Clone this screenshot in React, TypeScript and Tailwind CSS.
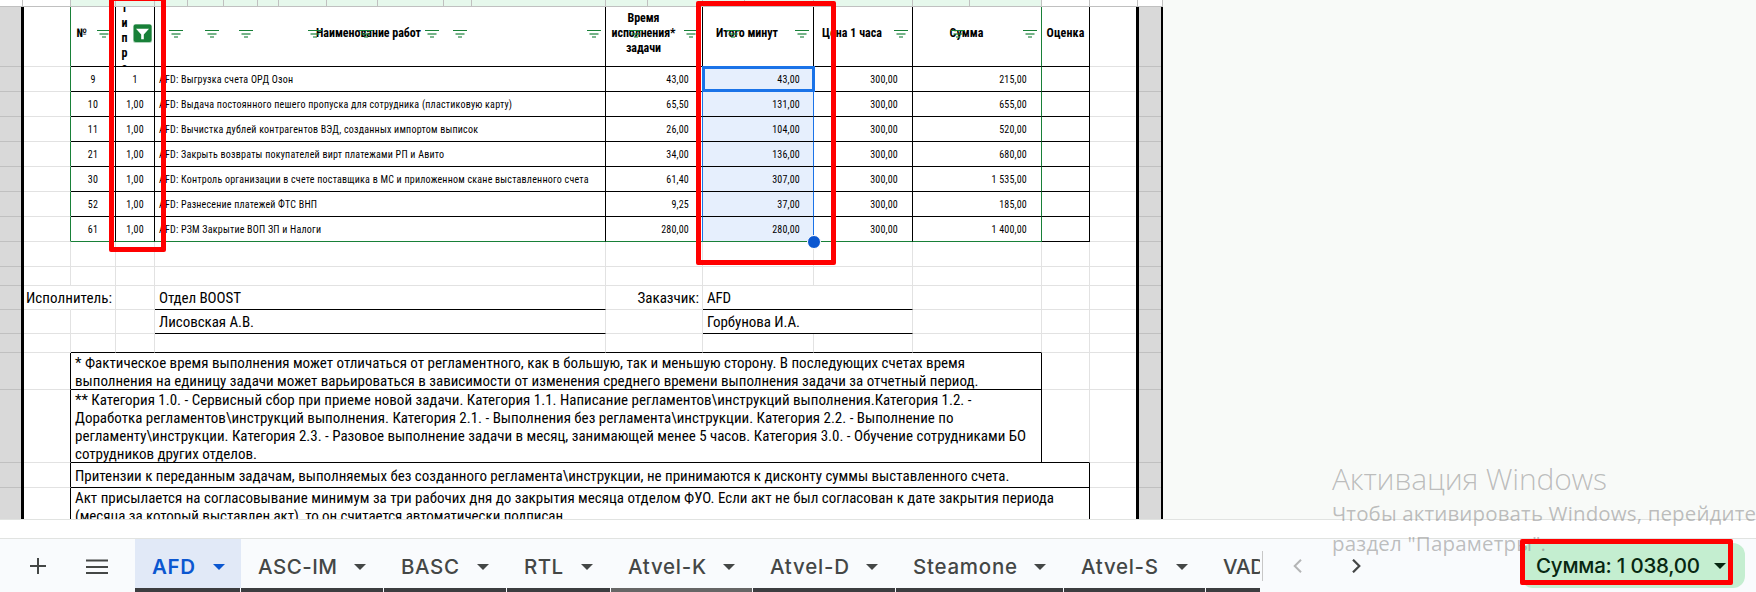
import { useLayoutEffect, useRef, type ReactNode } from "react";

/** Spreads a single line of text over the given width by adjusting its tracking. */
function Fit({ w, children, className = "" }: { w: number; children: string; className?: string }) {
  const ref = useRef<HTMLSpanElement>(null);
  useLayoutEffect(() => {
    const el = ref.current;
    if (!el) return;
    el.style.letterSpacing = "0px";
    const natural = el.getBoundingClientRect().width;
    const gaps = Math.max(children.length - 1, 1);
    const spacing = (w - natural) / gaps;
    el.style.letterSpacing = `${spacing}px`;
    el.style.marginRight = `${-spacing}px`;
  }, [w, children]);
  return (
    <span ref={ref} className={`inline-block whitespace-pre ${className}`}>
      {children}
    </span>
  );
}

const topSegments = [
  "w-[23px] bg-white",
  "w-[48px] bg-white",
  "w-[45px] bg-[#e6f8ec]",
  "w-[39px] bg-[#e6f8ec]",
  "w-[33px] bg-[#e6f8ec]",
  "w-[36px] bg-[#e6f8ec]",
  "w-[34px] bg-[#e6f8ec]",
  "w-[21px] bg-[#e6f8ec]",
  "w-[48px] bg-[#e6f8ec]",
  "w-[51px] bg-[#e6f8ec]",
  "w-[66px] bg-[#e6f8ec]",
  "w-[28px] bg-[#e6f8ec]",
  "w-[134px] bg-[#e6f8ec]",
  "w-[42px] bg-[#e6f8ec]",
  "w-[55px] bg-[#e6f8ec]",
  "w-[42px] bg-[#e6f8ec]",
  "w-[69px] bg-[#e6f8ec]",
  "w-[99px] bg-[#e6f8ec]",
  "w-[57px] bg-[#e6f8ec]",
  "w-[72px] bg-[#e6f8ec]",
  "w-[48px] bg-white",
  "w-[48px] bg-white",
  "w-[25px] bg-white",
];

const rowHeights = [
  "h-[60px]", "h-[25px]", "h-[25px]", "h-[25px]", "h-[25px]", "h-[25px]", "h-[25px]", "h-[25px]",
  "h-[25px]", "h-[19px]", "h-[24px]", "h-[24px]", "h-[19px]", "h-[37px]", "h-[73px]", "h-[25px]",
];

function GraySide({ className }: { className: string }) {
  return (
    <div className={`flex shrink-0 flex-col bg-[#d9d9d9] ${className}`}>
      {rowHeights.map((h, i) => (
        <div key={i} className={`shrink-0 border-b border-[#c0c0c0] ${h}`} />
      ))}
    </div>
  );
}

const filterSpots = [
  "left-[97px]", "left-[169px]", "left-[205px]", "left-[239px]", "left-[308px]", "left-[359px]",
  "left-[425px]", "left-[453px]", "left-[587px]", "left-[629px]", "left-[684px]", "left-[726px]",
  "left-[795px]", "left-[894px]", "left-[951px]", "left-[1023px]",
];

function FilterLines({ className }: { className: string }) {
  return (
    <svg className={`absolute top-[30px] h-2 w-3.5 ${className}`} viewBox="0 0 14 8" fill="#188038">
      <rect x="0" y="0" width="14" height="1" />
      <rect x="2.5" y="3" width="9" height="2" opacity=".6" />
      <rect x="5" y="6" width="4" height="2" opacity=".55" />
    </svg>
  );
}

type Task = { n: string; type: string; name: string; w: number; time: string; total: string; sum: string };
const tasks: Task[] = [
  { n: "9", type: "1", name: "AFD: Выгрузка счета ОРД Озон", w: 134, time: "43,00", total: "43,00", sum: "215,00" },
  { n: "10", type: "1,00", name: "AFD: Выдача постоянного пешего пропуска для сотрудника (пластиковую карту)", w: 353, time: "65,50", total: "131,00", sum: "655,00" },
  { n: "11", type: "1,00", name: "AFD: Вычистка дублей контрагентов ВЭД, созданных импортом выписок", w: 319, time: "26,00", total: "104,00", sum: "520,00" },
  { n: "21", type: "1,00", name: "AFD: Закрыть возвраты покупателей вирт платежами РП и Авито", w: 285, time: "34,00", total: "136,00", sum: "680,00" },
  { n: "30", type: "1,00", name: "AFD: Контроль организации в счете поставщика в МС и приложенном скане выставленного счета", w: 429.5, time: "61,40", total: "307,00", sum: "1 535,00" },
  { n: "52", type: "1,00", name: "AFD: Разнесение платежей ФТС ВНП", w: 158, time: "9,25", total: "37,00", sum: "185,00" },
  { n: "61", type: "1,00", name: "AFD: РЗМ Закрытие ВОП ЗП и Налоги", w: 162, time: "280,00", total: "280,00", sum: "1 400,00" },
];

function Cell({ className = "", children }: { className?: string; children?: ReactNode }) {
  return <div className={`flex h-full shrink-0 border-r border-b ${className}`}>{children}</div>;
}

const L = "border-[#e2e2e2]";

function TaskRow({ t, first, last }: { t: Task; first: boolean; last: boolean }) {
  const bottom = last ? "border-b-[#188038]" : "border-b-black";
  const num = "items-center justify-end pt-[2px] tracking-[0.2px]";
  const mid = "items-center justify-center pt-[2px] tracking-[0.2px]";
  return (
    <div className="flex h-[25px] shrink-0 text-[10px] leading-3">
      <Cell className="w-[47px] border-r-[#188038] border-b-[#e2e2e2]" />
      <Cell className={`w-[45px] border-r-black ${mid} ${bottom}`}>{t.n}</Cell>
      <Cell className={`w-[39px] border-r-black ${mid} ${bottom}`}>{t.type}</Cell>
      <Cell className={`w-[451px] items-center border-r-black pt-[2px] pl-1 ${bottom}`}>
        <Fit w={t.w}>{t.name}</Fit>
      </Cell>
      <Cell className={`w-[97px] border-r-[#1a73e8] pr-[13px] ${num} ${bottom}`}>{t.time}</Cell>
      <Cell className={`relative w-[111px] border-r-[#1a73e8] bg-[#e6effd] pr-[13px] ${num} ${bottom}`}>
        {t.total}
        {first && <span className="absolute -top-px -right-[2px] -bottom-px -left-px border-[3px] border-[#1a73e8]" />}
        {last && <span className="absolute -right-[8px] -bottom-[8px] z-10 size-3.5 rounded-full border border-white bg-[#0b57d0]" />}
      </Cell>
      <Cell className={`w-[99px] border-r-black pr-3.5 ${num} ${bottom}`}>300,00</Cell>
      <Cell className={`w-[129px] border-r-[#188038] pr-3.5 ${num} ${bottom}`}>{t.sum}</Cell>
      <Cell className="w-[48px] border-black" />
      <Cell className="w-[46px] border-r-transparent border-b-[#e2e2e2]" />
    </div>
  );
}

function EmptyRow({ className, b = "border-b-[#e2e2e2]" }: { className: string; b?: string }) {
  const c = `border-r-[#e2e2e2] ${b}`;
  return (
    <div className={`flex shrink-0 ${className}`}>
      <Cell className={`w-[47px] ${L}`} />
      <Cell className={`w-[45px] ${c}`} />
      <Cell className={`w-[39px] ${c}`} />
      <Cell className={`w-[451px] ${c}`} />
      <Cell className={`w-[97px] ${c}`} />
      <Cell className={`w-[111px] ${c}`} />
      <Cell className={`w-[99px] ${c}`} />
      <Cell className={`w-[129px] ${c}`} />
      <Cell className={`w-[48px] ${L}`} />
      <Cell className="w-[46px] border-r-transparent border-b-[#e2e2e2]" />
    </div>
  );
}

const head = "items-center justify-center border-b-black pb-[6px]";

function Sheet() {
  return (
    <div className="flex w-[1112px] shrink-0 flex-col overflow-hidden bg-white">
      <div className="flex h-[60px] shrink-0 text-[12px] leading-[15px] font-bold">
        <Cell className="w-[47px] border-r-[#188038] border-b-[#e2e2e2]" />
        <Cell className={`w-[45px] border-r-black pr-[23px] ${head}`}>
          <Fit w={10}>№</Fit>
        </Cell>
        <Cell className="w-[39px] overflow-hidden border-black">
          <div className="-mt-[6px] ml-[5px] flex w-[7px] flex-col items-center">
            <span>т</span><span>и</span><span>п</span><span>р</span><span>о</span>
          </div>
        </Cell>
        <Cell className={`w-[451px] border-r-black pr-[23px] ${head}`}>
          <Fit w={105}>Наименование работ</Fit>
        </Cell>
        <Cell className={`w-[97px] flex-col border-r-black pr-[21px] ${head}`}>
          <Fit w={32}>Время</Fit>
          <Fit w={64}>исполнения*</Fit>
          <Fit w={35}>задачи</Fit>
        </Cell>
        <Cell className={`w-[111px] border-r-black pr-[22px] ${head}`}>
          <Fit w={62}>Итого минут</Fit>
        </Cell>
        <Cell className={`w-[99px] border-r-black pr-[22px] ${head}`}>
          <Fit w={60}>Цена 1 часа</Fit>
        </Cell>
        <Cell className={`w-[129px] border-r-[#188038] pr-[21px] ${head}`}>
          <Fit w={34}>Сумма</Fit>
        </Cell>
        <Cell className={`w-[48px] border-r-black ${head}`}>
          <Fit w={38}>Оценка</Fit>
        </Cell>
        <Cell className="w-[46px] border-r-transparent border-b-[#e2e2e2]" />
      </div>
      {tasks.map((t, i) => (
        <TaskRow key={t.n} t={t} first={i === 0} last={i === tasks.length - 1} />
      ))}
      <EmptyRow className="h-[25px]" />
      <EmptyRow className="h-[19px]" />
      <div className="flex h-6 shrink-0 text-[15px] leading-[18px]">
        <Cell className="w-[47px] border-r-transparent border-b-[#e2e2e2]" />
        <Cell className={`w-[45px] justify-end pt-[3px] pr-[3px] ${L}`}>
          <Fit w={86}>Исполнитель:</Fit>
        </Cell>
        <Cell className="w-[39px] border-[#e2e2e2]" />
        <Cell className="w-[451px] border-r-[#e2e2e2] border-b-black pt-[3px] pl-1">
          <Fit w={82}>Отдел BOOST</Fit>
        </Cell>
        <Cell className={`w-[97px] justify-end pt-[3px] pr-[3px] ${L}`}>
          <Fit w={61.5}>Заказчик:</Fit>
        </Cell>
        <Cell className="w-[210px] border-r-[#e2e2e2] border-b-black pt-[3px] pl-1">
          <Fit w={24}>AFD</Fit>
        </Cell>
        <Cell className={`w-[129px] ${L}`} />
        <Cell className={`w-[48px] ${L}`} />
        <Cell className="w-[46px] border-r-transparent border-b-[#e2e2e2]" />
      </div>
      <div className="flex h-6 shrink-0 text-[15px] leading-[18px]">
        <Cell className={`w-[47px] ${L}`} />
        <Cell className={`w-[45px] ${L}`} />
        <Cell className={`w-[39px] ${L}`} />
        <Cell className="w-[451px] border-r-[#e2e2e2] border-b-black pt-[3px] pl-1">
          <Fit w={95}>Лисовская А.В.</Fit>
        </Cell>
        <Cell className={`w-[97px] ${L}`} />
        <Cell className="w-[210px] border-r-[#e2e2e2] border-b-black pt-[3px] pl-1">
          <Fit w={93}>Горбунова И.А.</Fit>
        </Cell>
        <Cell className={`w-[129px] ${L}`} />
        <Cell className={`w-[48px] ${L}`} />
        <Cell className="w-[46px] border-r-transparent border-b-[#e2e2e2]" />
      </div>
      <EmptyRow className="h-[19px]" b="border-b-black" />
      <div className="flex h-[37px] shrink-0 text-[15px] leading-[18px]">
        <Cell className="w-[47px] border-r-black border-b-[#e2e2e2]" />
        <Cell className="w-[971px] flex-col items-start border-black pt-px pl-1">
          <Fit w={890}>* Фактическое время выполнения может отличаться от регламентного, как в большую, так и меньшую сторону. В последующих счетах время</Fit>
          <Fit w={903.5}>выполнения на единицу задачи может варьироваться в зависимости от изменения среднего времени выполнения задачи за отчетный период.</Fit>
        </Cell>
        <Cell className={`w-[48px] ${L}`} />
        <Cell className="w-[46px] border-r-transparent border-b-[#e2e2e2]" />
      </div>
      <div className="flex h-[73px] shrink-0 text-[15px] leading-[18px]">
        <Cell className="w-[47px] border-r-black border-b-[#e2e2e2]" />
        <Cell className="w-[971px] flex-col items-start border-black pt-px pl-1">
          <Fit w={896.5}>** Категория 1.0. - Сервисный сбор при приеме новой задачи. Категория 1.1. Написание регламентов\инструкций выполнения.Категория 1.2. -</Fit>
          <Fit w={878.5}>Доработка регламентов\инструкций выполнения. Категория 2.1. - Выполнения без регламента\инструкции. Категория 2.2. - Выполнение по</Fit>
          <Fit w={951}>регламенту\инструкции. Категория 2.3. - Разовое выполнение задачи в месяц, занимающей менее 5 часов. Категория 3.0. - Обучение сотрудниками БО</Fit>
          <Fit w={182}>сотрудников других отделов.</Fit>
        </Cell>
        <Cell className="w-[48px] border-r-[#e2e2e2] border-b-black" />
        <Cell className="w-[46px] border-r-transparent border-b-[#e2e2e2]" />
      </div>
      <div className="flex h-[25px] shrink-0 text-[15px] leading-[18px]">
        <Cell className="w-[47px] border-r-black border-b-[#e2e2e2]" />
        <Cell className="w-[1019px] border-black pt-1 pl-1">
          <Fit w={934.5}>Притензии к переданным задачам, выполняемых без созданного регламента\инструкции, не принимаются к дисконту суммы выставленного счета.</Fit>
        </Cell>
        <Cell className="w-[46px] border-r-transparent border-b-[#e2e2e2]" />
      </div>
      <div className="flex h-[37px] shrink-0 text-[15px] leading-[18px]">
        <Cell className="w-[47px] border-r-black border-b-transparent" />
        <Cell className="w-[1019px] flex-col items-start border-black pt-px pl-1">
          <Fit w={979}>Акт присылается на согласовывание минимум за три рабочих дня до закрытия месяца отделом ФУО. Если акт не был согласован к дате закрытия периода</Fit>
          <Fit w={492}>(месяца за который выставлен акт), то он считается автоматически подписан.</Fit>
        </Cell>
      </div>
    </div>
  );
}

const tabs = [
  { name: "ASC-IM", w: 79, tab: "w-[143px]", bar: "bg-[#3c3d40]" },
  { name: "BASC", w: 58, tab: "w-[123px]", bar: "bg-[#3c3d40]" },
  { name: "RTL", w: 39, tab: "w-[104px]", bar: "bg-[#3c3d40]" },
  { name: "Atvel-K", w: 78, tab: "w-[142px]", bar: "bg-[#666666]" },
  { name: "Atvel-D", w: 79, tab: "w-[143px]", bar: "bg-[#3c3d40]" },
  { name: "Steamone", w: 104, tab: "w-[168px]", bar: "bg-[#3c3d40]" },
  { name: "Atvel-S", w: 77, tab: "w-[142px]", bar: "bg-[#3c3d40]" },
  { name: "VADIM", w: 66, tab: "w-[133px]", bar: "bg-[#3c3d40]" },
];

function Caret() {
  return (
    <svg className="h-1.5 w-3" viewBox="0 0 12 6" fill="currentColor">
      <path d="M0 0h12L6 6z" />
    </svg>
  );
}

function TabBar() {
  return (
    <div className="flex h-[53px] shrink-0 bg-[#f9fbfd] font-[Inter,sans-serif] text-[20.5px] text-[#444746]">
      <div className="flex w-[135px] shrink-0 items-start pt-[19px] pl-[30px]">
        <svg className="mr-10 h-4 w-4" viewBox="0 0 16 16" stroke="currentColor" strokeWidth="2" fill="none">
          <path d="M8 0v16M0 8h16" />
        </svg>
        <svg className="mt-px h-4 w-[22px]" viewBox="0 0 22 16" stroke="currentColor" strokeWidth="2" fill="none">
          <path d="M0 1.5h22M0 8h22M0 14h22" />
        </svg>
      </div>
      <div className="flex w-[1125px] shrink-0 overflow-hidden">
        <div className="flex w-[106px] shrink-0 flex-col">
          <div className="flex h-[49px] items-center justify-between bg-[#e1e9f7] pt-[7px] pr-4 pl-[17px] font-semibold text-[#0b57d0]">
            <Fit w={43}>AFD</Fit>
            <Caret />
          </div>
          <div className="mr-px h-1 bg-[#3c3d40]" />
        </div>
        {tabs.map((t) => (
          <div key={t.name} className={`flex shrink-0 flex-col ${t.tab}`}>
            <div className="flex h-[49px] items-center justify-between pt-[7px] pr-[18px] pl-[17px] font-medium">
              <Fit w={t.w}>{t.name}</Fit>
              <Caret />
            </div>
            <div className={`mr-px h-1 ${t.bar}`} />
          </div>
        ))}
      </div>
      <div className="mt-3 ml-0.5 h-[30px] w-px shrink-0 bg-[#c7c7c7]" />
      <svg className="mt-5 ml-[30px] h-3.5 w-[9px] shrink-0" viewBox="0 0 9 14" fill="none" stroke="#b4b5b6" strokeWidth="2">
        <path d="M8 .7 1.7 7 8 13.3" />
      </svg>
      <svg className="mt-5 ml-[50px] h-3.5 w-[9px] shrink-0" viewBox="0 0 9 14" fill="none" stroke="#444746" strokeWidth="2.2">
        <path d="M1 .7 7.3 7 1 13.3" />
      </svg>
      <div className="mt-1 ml-[160px] flex h-[45px] w-[224px] shrink-0 items-center rounded-xl bg-[#c4eed0] pt-px pl-[15px] font-medium text-[#072711]">
        <Fit w={164}>Сумма: 1 038,00</Fit>
        <span className="ml-3.5">
          <Caret />
        </span>
      </div>
    </div>
  );
}

export default function App() {
  return (
    <div className="relative flex h-[592px] w-[1756px] flex-col overflow-hidden bg-white font-['Roboto_Condensed',Roboto,sans-serif] text-black">
      <div className="flex h-[519px] shrink-0 flex-col overflow-hidden bg-[#f8faf8]">
        <div className="flex h-[7px] w-[1163px] shrink-0 border-b border-[#c0c0c0]">
          {topSegments.map((s, i) => (
            <div key={i} className={`shrink-0 border-r border-[#c0c0c0] ${s}`} />
          ))}
        </div>
        <div className="flex h-[512px] shrink-0 overflow-hidden">
          <GraySide className="w-[21px]" />
          <div className="w-[3px] shrink-0 bg-black" />
          <Sheet />
          <div className="w-[3px] shrink-0 bg-black" />
          <GraySide className="w-[22px]" />
          <div className="w-[2px] shrink-0 bg-black" />
        </div>
      </div>
      <div className="h-5 shrink-0 border-y border-[#e1e3e1] bg-white" />
      <TabBar />

      {filterSpots.map((s) => (
        <FilterLines key={s} className={s} />
      ))}
      <svg className="absolute top-[24px] left-[133px] h-[19px] w-[19px]" viewBox="0 0 19 19">
        <rect x="0" y="0" width="19" height="19" rx="2.5" fill="#188038" opacity=".35" />
        <rect x=".7" y=".5" width="17.8" height="17.5" rx="2" fill="#188038" />
        <path d="M3 4.7h13L10.8 10.6v4.7H8.2v-4.7z" fill="#fff" />
      </svg>

      <div className="pointer-events-none absolute top-[456px] left-[1332px] flex flex-col items-start font-['Open_Sans','Noto_Sans',sans-serif] text-[#7878787a]">
        <Fit w={275} className="text-[30px] leading-[45px] font-[350]">Активация Windows</Fit>
        <Fit w={424} className="text-[20.5px] leading-[24px]">Чтобы активировать Windows, перейдите</Fit>
        <Fit w={214} className="mt-[6px] text-[20.5px] leading-[24px]">раздел "Параметры".</Fit>
      </div>

      <div className="absolute -top-1 left-[109px] h-[256px] w-[57px] rounded-xs border-5 border-[#ff0000]" />
      <div className="absolute top-px left-[696px] h-[264px] w-[140px] rounded-xs border-5 border-[#ff0000]" />
      <div className="absolute top-[539px] left-[1520px] h-[46px] w-[213px] rounded-xs border-5 border-[#ff0000]" />
    </div>
  );
}
